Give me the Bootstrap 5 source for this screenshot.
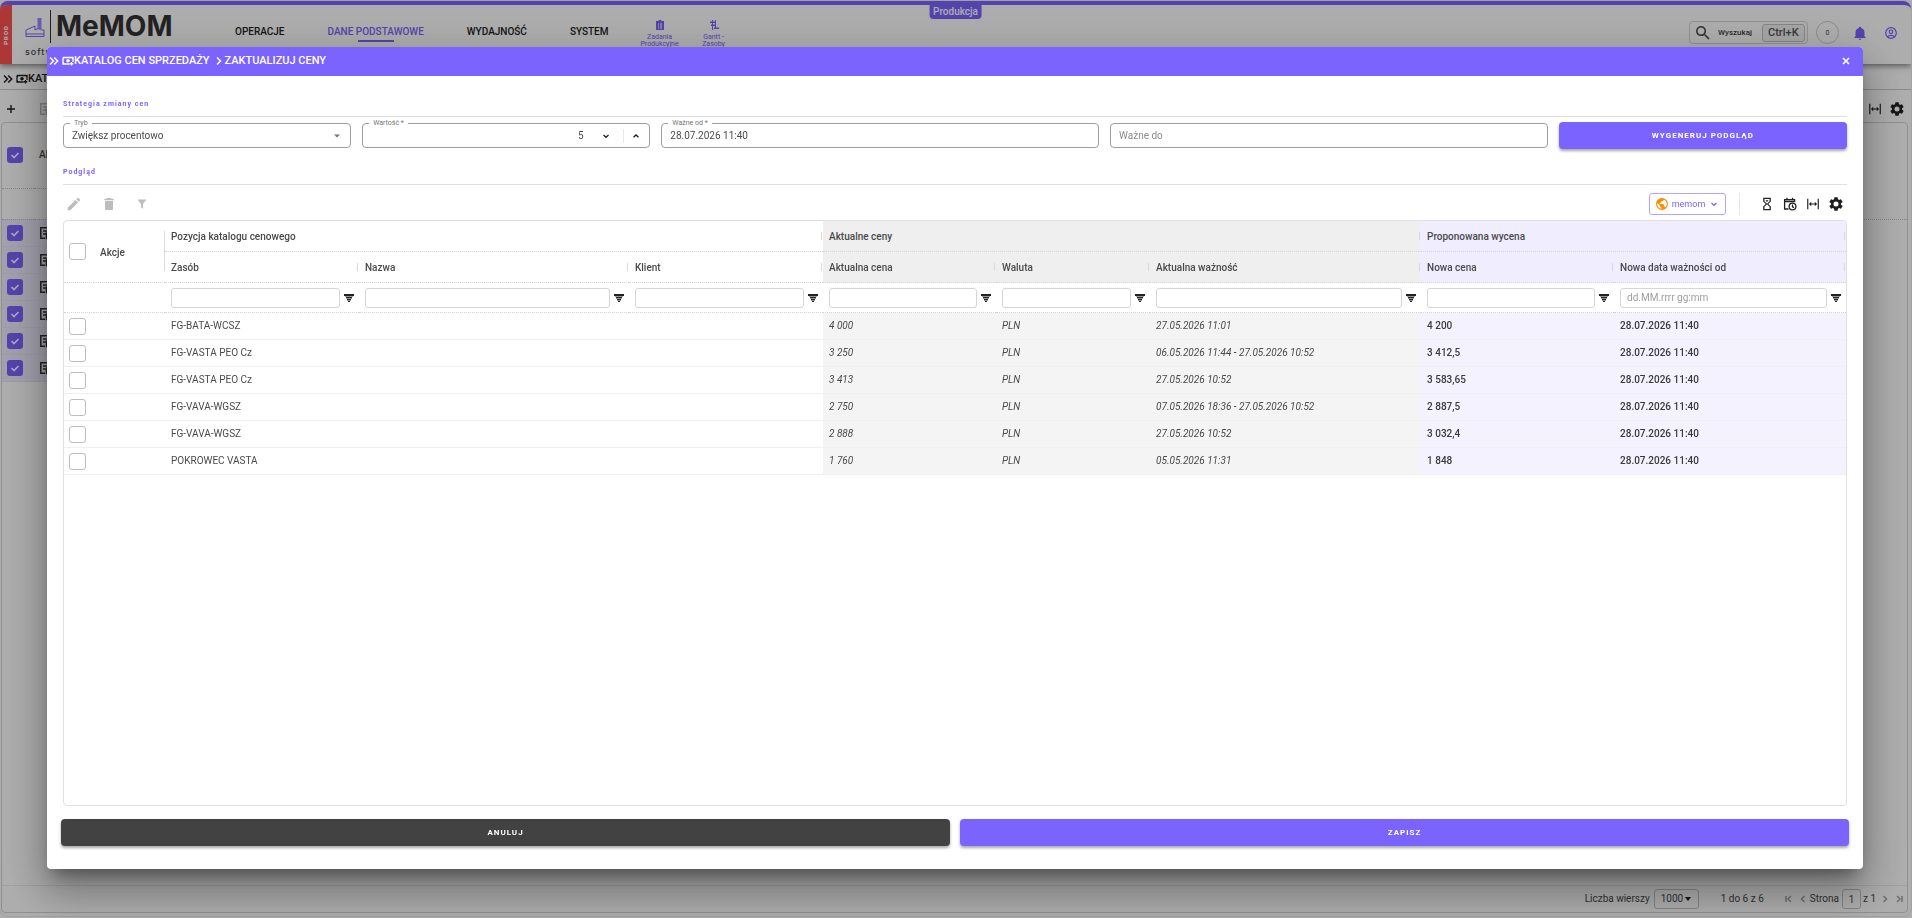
<!DOCTYPE html>
<html lang="pl">
<head>
<meta charset="utf-8">
<meta name="viewport" content="width=device-width, initial-scale=1">
<title>MeMOM – Zaktualizuj ceny</title>
<link href="https://cdn.jsdelivr.net/npm/bootstrap@5.3.0/dist/css/bootstrap.min.css" rel="stylesheet">
<style>
:root{--brand:#7b63ff;--line:#e0e0e0;--ink:#4a4a4a}
body{font-family:Roboto,"Open Sans",sans-serif;font-size:10px;line-height:16px;color:var(--ink);background:#fff;overflow:hidden}
svg{display:block;fill:currentColor;flex:none}
.i10{width:10px;height:10px}.i12{width:12px;height:12px}.i14{width:14px;height:14px}.i16{width:16px;height:16px}
.ico{border:0;background:none;padding:0;color:#212121;display:flex;align-items:center;justify-content:center}
.ico:disabled{color:#bdbdbd}
.brand-ink{color:var(--brand)}

/* application shell behind the dialog */
.shell{height:100vh;padding:1px 1px 2px 0}
.frame{border-top:4px solid var(--brand);border-radius:8px;overflow:hidden;box-shadow:0 0 0 1px #eee}
.topbar{height:59px;box-shadow:0 2px 6px rgba(0,0,0,.5);z-index:1}
.env-strip{width:12px;background:#ff5252;color:#fff;font-size:6px;font-weight:700;letter-spacing:1px}
.env-strip span{writing-mode:vertical-rl;transform:rotate(180deg)}
.env-tag{left:50%;top:0;transform:translateX(-50%);background:var(--brand);color:#fff;font-size:10px;font-weight:500;line-height:14px;padding:0 4px;border-radius:0 0 4px 4px;z-index:2}
.logo{width:150px;margin-left:13px;padding-top:5px}
.logo-word{font-family:Inter,sans-serif;font-weight:700;font-size:28px;line-height:33px;border-left:1px solid #333;padding-left:5px;margin-left:5px;color:#333}
.logo-sub{font-family:Inter,sans-serif;font-size:9px;line-height:18px;letter-spacing:1px;font-weight:500}
.menu{margin-left:60px;gap:43px;padding-top:19px}
.menu a{font-size:10px;font-weight:500;color:#212121;text-decoration:none;line-height:16px;position:relative}
.menu a.active{color:var(--brand)}
.menu a.active::after{content:"";position:absolute;left:calc(50% - 18px);width:36px;bottom:-2px;height:2px;background:var(--brand)}
.quick{width:54px;padding-top:15px;font-size:7px;line-height:7px;color:var(--brand);text-align:center;text-decoration:none}
.search{border:1px solid #d5d5d5;border-radius:4px;height:23px;width:119px;padding:0 8px 0 6px;gap:8px}
.search input{border:0;background:none;width:36px;padding:0;font-size:8px;font-weight:500;outline:0}
.search input::placeholder{color:#424242;opacity:1}
.search kbd{background:#f3f3f3;border:1px solid #c4c4c4;color:#555;font-family:Roboto,sans-serif;font-weight:500;font-size:11px;line-height:16px;padding:0 5px;border-radius:3px}
.counter{width:23px;height:23px;border:1px solid #ccc;border-radius:50%;font-size:7px}
.top-end{padding-right:14px}
.bell{margin-left:6px}.user{margin-left:10px}
.crumbs{font-size:11px;font-weight:500;height:26px;padding-left:3px;color:#212121}
.crumbs svg + svg,.modal-title svg + svg{margin-left:3px}
.under{border-bottom:1px solid #ccc}
.back-tools{height:32px;padding:5px 3px 0}
.back-grid{border:1px solid #d5d5d5;border-radius:4px;margin:0 3px 3px 1px}
.back-grid table{width:100%;table-layout:fixed}
.back-grid td,.back-grid th{padding:0 0 0 5px;font-weight:500}
.c-tick{width:32px}.c-act{width:1780px}
.back-grid thead tr:first-child{height:65px}
.back-grid thead tr:last-child{height:31px}
.dots th,.dots td{border-bottom:1px dotted #c4c4c4}
.back-grid tbody tr{height:27px}
.back-grid tbody td.sel{background:#eeecfe;border-bottom:1px solid #e8e6f6;color:#333}
.pager{height:27px;border-top:1px solid #ececec;font-size:10px;padding-right:3px}
.pager select,.pager input{border:1px solid #c4c4c4;border-radius:3px;background:none;height:20px;font-size:10px;color:inherit}
.pager select{width:45px;padding:0 14px 0 6px;appearance:none;background:url("data:image/svg+xml,%3Csvg xmlns='http://www.w3.org/2000/svg' viewBox='0 0 6 4'%3E%3Cpath d='M0 0h6L3 4z' fill='%23212121'/%3E%3C/svg%3E") no-repeat right 7px center/6px 4px}
.pager input{width:19px;padding:0;text-align:center}
.pager .of{margin-left:2px}
.pager .span-rows{margin:0 20px 0 22px}
.pager .page-label{margin:0 3px 0 2px}

.tick{appearance:none;width:17px;height:17px;border:1px solid #bdbdbd;border-radius:3px;margin:0;display:block;background:#fff}
.tick:checked{width:16px;height:16px;border:0;background:var(--brand) url("data:image/svg+xml,%3Csvg xmlns='http://www.w3.org/2000/svg' viewBox='0 0 16 16'%3E%3Cpath d='M4.500 8l2.500 2.500 4.500-4.500' fill='none' stroke='%23fff' stroke-width='1.600'/%3E%3C/svg%3E")}

/* dialog */
.veil{position:fixed;inset:0;background:rgba(0,0,0,.32);z-index:1040}
.modal.sheet{padding:47px 49px 49px 47px}
.sheet .modal-dialog{max-width:none;margin:0;height:100%}
.sheet .modal-content{height:100%;border:0;border-radius:4px;color:var(--ink);box-shadow:0 11px 15px -7px rgba(0,0,0,.4),0 24px 38px 3px rgba(0,0,0,.24),0 9px 46px 8px rgba(0,0,0,.12)}
.sheet .modal-header{background:var(--brand);color:#fff;height:29px;padding:0 11px 2px 2px;border:0;border-radius:4px 4px 0 0}
.sheet .modal-title{font-size:11px;font-weight:500;line-height:16px}
.sheet .modal-body{padding:20px 16px 0;display:flex;flex-direction:column;min-height:0}
.sheet .modal-footer{border:0;padding:13px 14px 23px;gap:10px;flex-wrap:nowrap}
.sect{font-size:7px;line-height:16px;font-weight:700;letter-spacing:1px;color:var(--brand);padding-bottom:4px;border-bottom:1px solid var(--line);margin:0}
.slim{--bs-gutter-x:11px;padding:5px 0 15px}
.box{position:relative;height:25px;border:1px solid #9e9e9e;border-radius:4px;display:flex;align-items:center}
.box label{position:absolute;left:6px;top:-7px;background:#fff;padding:0 4px;font-size:7px;line-height:12px;color:#757575}
.box input,.box select{border:0;outline:0;background:none;width:100%;padding:0 8px;font-size:10px;color:var(--ink);appearance:none;height:23px}
.box input.text-end{padding-right:5px}
.box input::placeholder{color:#8a8a8a;opacity:1}
.box .vr{height:14px;align-self:center;color:#9e9e9e}
.act{height:27px;font-size:8px;font-weight:700;letter-spacing:1px;color:#fff;border:0;border-radius:4px;padding:0;background:var(--brand);box-shadow:0 2px 3px rgba(0,0,0,.35)}
.act:hover{background:#6a52ee;color:#fff}
.act.dark{background:#424242}
.tools{height:35px;padding:3px 4px 0}
.tools .left{gap:22px}
.view-btn{height:22px;width:77px;border:1px solid #b3a5ff;border-radius:3px;background:#fff;color:var(--brand);font-size:9px;padding:0;margin-right:4px}
.tools .vr{height:22px;margin-right:11px;color:#9e9e9e}
.tools .right{gap:9px}

.grid{border:1px solid var(--line);border-radius:4px;flex:1;overflow:hidden}
.grid table{width:100%;table-layout:fixed;border-collapse:separate;border-spacing:0}
.w-tick{width:30px}.w-act{width:71px}.w-a{width:194px}.w-b{width:270px}.w-c{width:173px}.w-d{width:154px}.w-e{width:271px}.w-f{width:193px}.w-g{width:232px}
.grid th,.grid td{padding:0 6px}
.grid th{font-weight:500;height:31px;position:relative;border-bottom:1px dotted #d4d4d4}
.grid thead th.bar{padding-top:2px}
.grid thead th.bar::after{content:"";position:absolute;right:1px;top:calc(50% - 4px);height:8px;border-right:1px solid #d9d9d9}
.grid thead th.tall::after{top:10px;height:40px;right:0}
.grid .filters td{height:30px;border-bottom:1px dotted #d4d4d4}
.grid .filters input{min-width:0;flex:1;height:20px;border:1px solid #d6d6d6;border-radius:3px;padding:0 6px;font-size:10px}
.grid .filters input::placeholder{color:#9e9e9e;opacity:1}
.grid tbody td{height:27px;border-bottom:1px solid #f0f0f0}
.grid th.now{background:#efefef}.grid th.new{background:#f0edff}
.grid tbody .now{background:#f4f4f4;font-style:italic}
.grid tbody .new{background:#f4f2ff;font-weight:500;color:#3a3a3a}
.grid .tk{padding:0 0 0 5px}
.grid .flt{gap:4px;margin-right:-1px}
</style>
</head>
<body>
<svg class="d-none" xmlns="http://www.w3.org/2000/svg">
<symbol id="chevs" viewBox="0 0 10 10"><path d="M1 1.500L4.500 5 1 8.500M5.200 1.500L8.700 5 5.200 8.500" fill="none" stroke="currentColor" stroke-width="1.500"/></symbol>
<symbol id="cash" viewBox="0 0 24 20"><path d="M2 3h20v9M2 3v13h13M19 12v7M15.500 15.500h7" fill="none" stroke="currentColor" stroke-width="2.600"/><circle cx="12" cy="9.500" r="3.600"/><path d="M2 3h4L2 7zM2 16v-4l4 4zM22 3v4l-4-4z"/></symbol>
<symbol id="cog" viewBox="0 0 24 24"><path d="M19.140 12.940c.04-.3.06-.61.06-.94 0-.32-.02-.64-.07-.94l2.030-1.580a.49.49 0 0 0 .12-.61l-1.920-3.320a.49.49 0 0 0-.59-.22l-2.390.96c-.5-.38-1.030-.7-1.620-.94l-.36-2.540a.48.48 0 0 0-.48-.41h-3.840c-.24 0-.43.17-.47.41l-.36 2.540c-.59.24-1.130.57-1.620.94l-2.390-.96a.48.48 0 0 0-.59.22L2.740 8.870c-.12.21-.08.47.12.61l2.030 1.580c-.05.3-.09.63-.09.94s.02.64.07.94l-2.030 1.580a.49.49 0 0 0-.12.61l1.920 3.320c.12.22.37.29.59.22l2.390-.96c.5.38 1.030.7 1.620.94l.36 2.540c.05.24.24.41.48.41h3.840c.24 0 .44-.17.47-.41l.36-2.540c.59-.24 1.130-.56 1.620-.94l2.390.96c.22.08.47 0 .59-.22l1.920-3.320c.12-.22.07-.47-.12-.61l-2.010-1.580zM12 15.600a3.600 3.600 0 1 1 0-7.200 3.600 3.600 0 0 1 0 7.200z"/></symbol>
<symbol id="fit" viewBox="0 0 24 24"><path d="M2 3h2v18H2zM20 3h2v18h-2zM9 8v3h6V8l4 4-4 4v-3H9v3l-4-4z"/></symbol>
<symbol id="fan" viewBox="0 0 10 8"><path d="M0 0h10v2H0zM2 3h6v1H2zM3 5h4v1H3zM4 7h2v1H4z"/><path d="M1 2h8v1H1zM2 4h6v1H2zM3 6h4v1H3z" opacity=".45"/></symbol>
<symbol id="down" viewBox="0 0 10 10"><path d="M2.500 4L5 6.300 7.500 4" fill="none" stroke="currentColor" stroke-width="1.300"/></symbol>
<symbol id="up" viewBox="0 0 10 10"><path d="M2.500 6.300L5 4l2.500 2.300" fill="none" stroke="currentColor" stroke-width="1.300"/></symbol>
<symbol id="rowdoc" viewBox="0 0 14 14"><path d="M12 5V1.800H1.800v10.400H6M4 5h8M4 8h3M7.500 7h5v5.500h-5z" fill="none" stroke="currentColor" stroke-width="1.500"/></symbol>
</svg>

<div class="shell">
<div class="frame h-100 d-flex flex-column position-relative">
  <div class="env-tag position-absolute">Produkcja</div>
  <header class="topbar d-flex position-relative">
    <div class="env-strip d-flex align-items-center justify-content-center"><span>PROD</span></div>
    <div class="logo d-flex flex-column">
      <div class="d-flex align-items-start">
        <svg class="brand-ink mt-2" width="20" height="20" viewBox="0 0 20 20"><path d="M1 18.500V12l9-4v4l3-1.500M16.500 12H19v6.500H1M1 16h18" fill="none" stroke="currentColor" stroke-width="1"/><path d="M12.500 0h4v12.500l-4-1.500z" opacity=".75"/></svg>
        <div class="logo-word">MeMOM</div>
      </div>
      <div class="logo-sub">software</div>
    </div>
    <nav class="menu d-flex align-items-start">
      <a href="#">OPERACJE</a><a href="#" class="active">DANE PODSTAWOWE</a><a href="#">WYDAJNOŚĆ</a><a href="#">SYSTEM</a>
    </nav>
    <div class="d-flex ms-4">
      <a href="#" class="quick d-flex flex-column align-items-center gap-1"><svg class="i10" viewBox="0 0 10 10"><path fill-rule="evenodd" d="M1 1h2.500a1.500 1.500 0 0 1 3 0H9v9H1zM3 3.500v1h1v-1zM5 3.500v1h2v-1zM3 5.500v1h1v-1zM5 5.500v1h2v-1zM3 7.500v1h1v-1zM5 7.500v1h2v-1z"/></svg><span>Zadania<br>Produkcyjne</span></a>
      <a href="#" class="quick d-flex flex-column align-items-center gap-1"><svg class="i10" viewBox="0 0 10 10"><path d="M3 0h1v10H3zM6 0h1v9H6zM1 1.500h6V3H1zM2 4.500h5V6H2zM5 7.500h5V9H5z"/></svg><span>Gantt -<br>Zasoby</span></a>
    </div>
    <div class="top-end d-flex align-items-center ms-auto gap-2 mb-1">
      <div class="search d-flex align-items-center">
        <svg class="i14" viewBox="3 3 18 18"><path d="M15.500 14h-.79l-.28-.27A6.470 6.470 0 0 0 16 9.500 6.500 6.500 0 1 0 9.500 16c1.610 0 3.090-.59 4.230-1.570l.27.28v.79l5 4.990L20.490 19zm-6 0C7.010 14 5 11.990 5 9.500S7.010 5 9.500 5 14 7.010 14 9.500 11.990 14 9.500 14z"/></svg>
        <input type="text" placeholder="Wyszukaj" aria-label="Wyszukaj"><kbd>Ctrl+K</kbd>
      </div>
      <div class="counter d-flex align-items-center justify-content-center">0</div>
      <button class="ico brand-ink bell" aria-label="Powiadomienia"><svg class="i14" viewBox="2 1 20 22"><path d="M21 19v1H3v-1l2-2v-6c0-3.100 2.030-5.830 5-6.710V4a2 2 0 0 1 4 0v.29c2.970.88 5 3.610 5 6.710v6zM14 21a2 2 0 0 1-4 0"/></svg></button>
      <button class="ico brand-ink user" aria-label="Konto"><svg class="i12" viewBox="0 0 12 12" fill="none"><g fill="none" stroke="currentColor" stroke-width="1.200"><circle cx="6" cy="6" r="5.300"/><circle cx="6" cy="4.800" r="1.800"/><path d="M2.500 9.800c1-2 6-2 7 0"/></g></svg></button>
    </div>
  </header>
  <div class="crumbs under d-flex align-items-center pt-1"><svg class="i10"><use href="#chevs"/></svg><svg class="i12"><use href="#cash"/></svg>KATALOG CEN SPRZEDAŻY</div>
  <div class="back-tools d-flex align-items-center">
    <button class="ico me-3" aria-label="Dodaj"><svg class="i16" viewBox="0 0 16 16"><path d="M7.300 4h1.400v3.300H12v1.400H8.700V12H7.300V8.700H4V7.300h3.300z"/></svg></button>
    <button class="ico ms-1" disabled aria-label="Edytuj"><svg class="i14"><use href="#rowdoc"/></svg></button>
    <div class="ms-auto d-flex gap-2 pe-1"><button class="ico" aria-label="Dopasuj"><svg class="i14"><use href="#fit"/></svg></button><button class="ico" aria-label="Ustawienia"><svg class="i14" viewBox="2 2 20 20"><use href="#cog" width="24" height="24"/></svg></button></div>
  </div>
  <section class="back-grid flex-grow-1 d-flex flex-column">
    <table>
      <colgroup><col class="c-tick"><col class="c-act"><col></colgroup>
      <thead>
        <tr class="dots"><th><input class="tick" type="checkbox" checked aria-label="Wszystkie"></th><th>Akcje</th><th class="border-0"></th></tr>
        <tr class="dots"><td></td><td></td><td></td></tr>
      </thead>
      <tbody id="backRows"></tbody>
    </table>
    <div class="pager mt-auto d-flex align-items-center justify-content-end">
      <label for="size" class="me-1">Liczba wierszy</label><select id="size"><option>1000</option></select>
      <span class="span-rows">1 do 6 z 6</span>
      <svg class="i10 opacity-50" viewBox="0 0 10 10"><path d="M2 2v6M7 2L4 5l3 3" fill="none" stroke="currentColor" stroke-width="1.500"/></svg>
      <svg class="i10 ms-1 opacity-50" viewBox="0 0 10 10"><path d="M6.500 2l-3 3 3 3" fill="none" stroke="currentColor" stroke-width="1.500"/></svg>
      <label for="pg" class="page-label">Strona</label><input id="pg" value="1"><span class="of">z 1</span>
      <svg class="i10 ms-1 opacity-50" viewBox="0 0 10 10"><path d="M3.500 2l3 3-3 3" fill="none" stroke="currentColor" stroke-width="1.500"/></svg>
      <svg class="i10 ms-1 opacity-50" viewBox="0 0 10 10"><path d="M3 2l3 3-3 3M8 2v6" fill="none" stroke="currentColor" stroke-width="1.500"/></svg>
    </div>
  </section>
</div>
</div>

<div class="veil"></div>
<div class="modal sheet d-block" role="dialog" aria-modal="true" aria-labelledby="ttl">
<div class="modal-dialog"><div class="modal-content">
  <div class="modal-header">
    <h1 class="modal-title d-flex align-items-center" id="ttl"><svg class="i10"><use href="#chevs"/></svg><svg class="i12"><use href="#cash"/></svg>KATALOG CEN SPRZEDAŻY<svg class="i12" viewBox="0 0 12 12"><path d="M4 2.500L7.500 6 4 9.500" fill="none" stroke="currentColor" stroke-width="1.500"/></svg>ZAKTUALIZUJ CENY</h1>
    <button class="ico text-white" aria-label="Zamknij"><svg class="i12" viewBox="0 0 12 12"><path d="M3 3l6 6M9 3L3 9" stroke="currentColor" stroke-width="1.600"/></svg></button>
  </div>
  <div class="modal-body">
    <h2 class="sect">Strategia zmiany cen</h2>
    <div class="row slim align-items-center">
      <div class="col-2"><div class="box"><label for="mode">Tryb</label><select id="mode"><option>Zwiększ procentowo</option></select><svg class="i10 me-2" viewBox="0 0 10 10"><path d="M2 3.500h6l-3 3z" fill="#757575"/></svg></div></div>
      <div class="col-2"><div class="box"><label for="val">Wartość *</label><input id="val" class="text-end" value="5"><button class="ico px-2 mx-1" aria-label="Mniej"><svg class="i10"><use href="#down"/></svg></button><span class="vr"></span><button class="ico px-2" aria-label="Więcej"><svg class="i10"><use href="#up"/></svg></button></div></div>
      <div class="col-3"><div class="box"><label for="from">Ważne od *</label><input id="from" value="28.07.2026 11:40"></div></div>
      <div class="col-3"><div class="box"><input aria-label="Ważne do" placeholder="Ważne do"></div></div>
      <div class="col-2"><button class="btn act w-100 d-block">WYGENERUJ PODGLĄD</button></div>
    </div>
    <h2 class="sect">Podgląd</h2>
    <div class="tools d-flex align-items-center">
      <div class="left d-flex align-items-center">
      <button class="ico" disabled aria-label="Edytuj"><svg class="i14" viewBox="2 2 20 20"><path d="M3 17.250V21h3.750L17.810 9.940l-3.750-3.750zM20.710 7.040a1 1 0 0 0 0-1.410l-2.340-2.340a1 1 0 0 0-1.410 0l-1.830 1.830 3.750 3.750z"/></svg></button>
      <button class="ico" disabled aria-label="Usuń"><svg class="i12" viewBox="3 3 18 18"><path d="M6 19c0 1.100.9 2 2 2h8c1.100 0 2-.9 2-2V7H6zM19 4h-3.500l-1-1h-5l-1 1H5v2h14z"/></svg></button>
      <button class="ico" disabled aria-label="Wyczyść filtry"><svg class="i10" viewBox="2 2 20 20"><path d="M14 12v8.500c0 .8-1 1-1.700.3l-2-2.100c-.2-.2-.3-.5-.3-.8V12L4.200 4.600C3.700 4 4 3 5 3h14c1 0 1.300 1 .8 1.600z"/></svg></button>
      </div>
      <div class="right ms-auto d-flex align-items-center">
        <button class="view-btn d-flex align-items-center justify-content-center"><svg class="i12 me-1" viewBox="2 2 20 20"><path fill="#fb8c00" d="M12 2a10 10 0 1 0 0 20 10 10 0 0 0 0-20zm-1 17.930c-3.950-.49-7-3.850-7-7.930 0-.62.08-1.210.21-1.790L9 15v1c0 1.100.9 2 2 2zm6.900-2.540c-.26-.81-1-1.390-1.900-1.390h-1v-3c0-.55-.45-1-1-1H8v-2h2c.55 0 1-.45 1-1V7h2c1.100 0 2-.9 2-2v-.41c2.930 1.190 5 4.060 5 7.410 0 2.080-.8 3.970-2.100 5.390z"/></svg>memom<svg class="i10 ms-1"><use href="#down"/></svg></button>
        <span class="vr"></span>
        <button class="ico" aria-label="Historia"><svg class="i14" viewBox="1 1 22 22"><path d="M6 2h12v6l-4 4 4 4v6H6v-6l4-4-4-4zm10 14.500l-4-4-4 4V20h8zm-4-5l4-4V4H8v3.500zM10 6h4v.75l-2 2-2-2z"/></svg></button>
        <button class="ico" aria-label="Kalendarz"><svg class="i14" viewBox="0 0 14 14"><g fill="none" stroke="currentColor" stroke-width="1.300"><path d="M5.500 12H1.600V2.600h10V5M1.600 4.500h10M4 .8v2M9.500.8v2"/><circle cx="9.500" cy="9.500" r="3.400"/><path d="M9.500 7.500v2.300l1.500.8"/></g></svg></button>
        <button class="ico" aria-label="Dopasuj kolumny"><svg class="i14"><use href="#fit"/></svg></button>
        <button class="ico" aria-label="Ustawienia siatki"><svg class="i14" viewBox="2 2 20 20"><use href="#cog" width="24" height="24"/></svg></button>
      </div>
    </div>
    <div class="grid">
      <table>
        <colgroup><col class="w-tick"><col class="w-act"><col class="w-a"><col class="w-b"><col class="w-a"><col class="w-c"><col class="w-d"><col class="w-e"><col class="w-f"><col class="w-g"></colgroup>
        <thead>
          <tr><th rowspan="2" class="tk"><input type="checkbox" class="tick" aria-label="Zaznacz wszystkie"></th><th rowspan="2" class="bar tall">Akcje</th><th colspan="3" class="bar">Pozycja katalogu cenowego</th><th colspan="3" class="now bar">Aktualne ceny</th><th colspan="2" class="new bar">Proponowana wycena</th></tr>
          <tr><th class="bar">Zasób</th><th class="bar">Nazwa</th><th class="bar">Klient</th><th class="now bar">Aktualna cena</th><th class="now bar">Waluta</th><th class="now bar">Aktualna ważność</th><th class="new bar">Nowa cena</th><th class="new bar">Nowa data ważności od</th></tr>
          <tr class="filters" id="filters"><td></td><td></td></tr>
        </thead>
        <tbody id="rows"></tbody>
      </table>
    </div>
  </div>
  <div class="modal-footer">
    <button class="btn act dark flex-fill w-50 m-0">ANULUJ</button>
    <button class="btn act flex-fill w-50 m-0">ZAPISZ</button>
  </div>
</div></div>
</div>

<script src="https://cdn.jsdelivr.net/npm/bootstrap@5.3.0/dist/js/bootstrap.bundle.min.js"></script>
<script>
const columns = ['Zasób','Nazwa','Klient','Aktualna cena','Waluta','Aktualna ważność','Nowa cena','Nowa data ważności od'];
document.getElementById('filters').insertAdjacentHTML('beforeend', columns.map((c,i)=>
  `<td><div class="flt d-flex align-items-center"><input aria-label="Filtr: ${c}" placeholder="${i===7?'dd.MM.rrrr gg:mm':''}"><button class="ico" aria-label="Operator: ${c}"><svg width="10" height="8"><use href="#fan"/></svg></button></div></td>`).join(''));
const data = [
  ['FG-BATA-WCSZ','4 000','27.05.2026 11:01','4 200'],
  ['FG-VASTA PEO Cz','3 250','06.05.2026 11:44 - 27.05.2026 10:52','3 412,5'],
  ['FG-VASTA PEO Cz','3 413','27.05.2026 10:52','3 583,65'],
  ['FG-VAVA-WGSZ','2 750','07.05.2026 18:36 - 27.05.2026 10:52','2 887,5'],
  ['FG-VAVA-WGSZ','2 888','27.05.2026 10:52','3 032,4'],
  ['POKROWEC VASTA','1 760','05.05.2026 11:31','1 848']
];
document.getElementById('rows').innerHTML = data.map(([n,p,v,q])=>
  `<tr><td class="tk"><input type="checkbox" class="tick" aria-label="${n}"></td><td></td><td>${n}</td><td></td><td></td><td class="now">${p}</td><td class="now">PLN</td><td class="now">${v}</td><td class="new">${q}</td><td class="new">28.07.2026 11:40</td></tr>`).join('');
document.getElementById('backRows').innerHTML = data.map(([n])=>
  `<tr><td class="sel"><input type="checkbox" class="tick" checked aria-label="${n}"></td><td class="sel"><svg class="i14"><use href="#rowdoc"/></svg></td><td></td></tr>`).join('');
</script>
</body>
</html>
